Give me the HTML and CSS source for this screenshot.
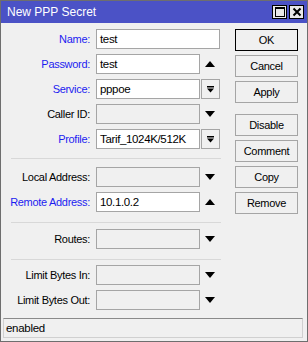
FILE: index.html
```html
<!DOCTYPE html>
<html>
<head>
<meta charset="utf-8">
<link rel="stylesheet" href="styles.css">
</head>
<body>
<div class="window">
  <div class="titlebar">
    <span class="title">New PPP Secret</span>
    <div class="tbtns">
      <div class="tbtn"><svg width="12" height="12" viewBox="0 0 12 12"><rect x="1.5" y="1.5" width="9" height="9" fill="none" stroke="#000" stroke-width="1"/><rect x="1" y="1" width="10" height="2" fill="#000"/></svg></div>
      <div class="tbtn"><svg width="12" height="12" viewBox="0 0 12 12"><path d="M2.5 2.5 L9.5 9.5 M9.5 2.5 L2.5 9.5" stroke="#000" stroke-width="2"/></svg></div>
    </div>
  </div>
  <div class="body">
    <div class="form">
      <div class="row"><label class="lbl blue">Name:</label><div class="field"><div class="input full">test</div></div></div>
      <div class="row"><label class="lbl blue">Password:</label><div class="field"><div class="input">test</div><span class="arrow up"></span></div></div>
      <div class="row"><label class="lbl blue">Service:</label><div class="field"><div class="input">pppoe</div><span class="dd"><svg width="9" height="9" viewBox="0 0 9 9"><rect x="1" y="1" width="7" height="1.5" fill="#000"/><path d="M1 3.5 H8 L4.5 7.5 Z" fill="#000"/></svg></span></div></div>
      <div class="row"><label class="lbl">Caller ID:</label><div class="field"><div class="input dis"></div><span class="arrow down"></span></div></div>
      <div class="row"><label class="lbl blue">Profile:</label><div class="field"><div class="input">Tarif_1024K/512K</div><span class="dd"><svg width="9" height="9" viewBox="0 0 9 9"><rect x="1" y="1" width="7" height="1.5" fill="#000"/><path d="M1 3.5 H8 L4.5 7.5 Z" fill="#000"/></svg></span></div></div>
      <div class="sep s1"></div>
      <div class="row"><label class="lbl">Local Address:</label><div class="field"><div class="input dis"></div><span class="arrow down"></span></div></div>
      <div class="row"><label class="lbl blue">Remote Address:</label><div class="field"><div class="input">10.1.0.2</div><span class="arrow up"></span></div></div>
      <div class="sep s2"></div>
      <div class="row"><label class="lbl">Routes:</label><div class="field"><div class="input dis"></div><span class="arrow down"></span></div></div>
      <div class="sep s3"></div>
      <div class="row"><label class="lbl">Limit Bytes In:</label><div class="field"><div class="input dis"></div><span class="arrow down"></span></div></div>
      <div class="row"><label class="lbl">Limit Bytes Out:</label><div class="field"><div class="input dis"></div><span class="arrow down"></span></div></div>
    </div>
    <div class="buttons">
      <div class="btn default">OK</div>
      <div class="btn">Cancel</div>
      <div class="btn">Apply</div>
      <div class="btn gap">Disable</div>
      <div class="btn">Comment</div>
      <div class="btn">Copy</div>
      <div class="btn">Remove</div>
    </div>
  </div>
  <div class="status">enabled</div>
</div>
</body>
</html>
```
FILE: styles.css
```css
* { box-sizing: border-box; }
html, body { margin: 0; padding: 0; }
body {
  width: 308px; height: 342px;
  font-family: "Liberation Sans", Arial, sans-serif;
  font-size: 11px;
  letter-spacing: -0.3px;
  color: #000;
  background: #f0f0f0;
}
.window {
  width: 308px; height: 342px;
  border: 1px solid #6e6e6e;
  background: #f0f0f0;
  display: flex; flex-direction: column;
}
.titlebar {
  height: 22px;
  background: #4b52c6;
  display: flex; align-items: center; justify-content: space-between;
  padding: 0 3px 0 6px;
  color: #fff;
}
.title { font-size: 12px; letter-spacing: 0; }
.tbtns { display: flex; gap: 2px; }
.tbtn {
  width: 15px; height: 14px;
  background: #e8e8e8;
  border: 1px solid #000;
  display: flex; align-items: center; justify-content: center;
}
.body { display: flex; flex: 1; padding-top: 6px; }
.form { width: 228px; display: flex; flex-direction: column; }
.row { display: flex; align-items: center; height: 20px; margin-bottom: 5px; flex: none; }
.lbl { width: 95px; text-align: right; padding-right: 6px; white-space: nowrap; }
.blue { color: #1c1cf0; }
.field { display: flex; align-items: center; }
.input {
  width: 104px; height: 20px;
  border: 1px solid #a5a5a5;
  background: #fff;
  padding: 2px 0 0 3px;
  font-size: 11.5px;
  letter-spacing: -0.35px;
  line-height: 15px;
  white-space: nowrap; overflow: hidden;
}
.input.dis { background: #f0f0f0; }
.input.full { width: 124px; }
.dd {
  width: 19px; height: 20px; margin-left: 1px;
  border: 1px solid #a5a5a5; background: #f0f0f0;
  display: flex; align-items: center; justify-content: center;
}
.arrow { width: 20px; height: 20px; display: flex; align-items: center; justify-content: center; }
.arrow::before { content: ""; width: 0; height: 0; border-left: 5px solid transparent; border-right: 5px solid transparent; }
.arrow.up::before { border-bottom: 6px solid #000; }
.arrow.down::before { border-top: 6px solid #000; }
.sep { height: 1px; flex: none; background: #d8d8d8; margin-left: 10px; margin-right: 8px; }
.s1 { margin-top: 4px; margin-bottom: 8px; }
.s2 { margin-top: 5px; margin-bottom: 6px; }
.s3 { margin-top: 5px; margin-bottom: 5px; }
.buttons { display: flex; flex-direction: column; gap: 4px; padding-left: 6px; }
.btn {
  width: 63px; height: 22px;
  border: 1px solid #a5a5a5;
  background: #f0f0f0;
  display: flex; align-items: center; justify-content: center;
}
.btn.default { border-color: #000; }
.btn.gap { margin-top: 7px; }
.status {
  margin: 0 4px 3px 2px;
  height: 20px;
  border: 1px solid #d0d0d0;
  border-top-color: #8a8a8a;
  padding-left: 2px;
  font-size: 11.5px;
  line-height: 18px;
}
```
